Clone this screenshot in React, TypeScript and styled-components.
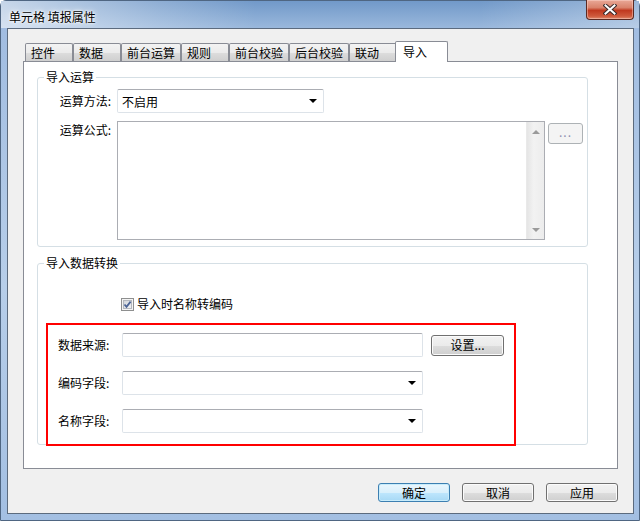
import React from "react";
import styled, { createGlobalStyle, css } from "styled-components";

const GlobalStyle = createGlobalStyle`
  html, body {
    margin: 0;
    padding: 0;
  }
  body {
    width: 640px;
    height: 521px;
    overflow: hidden;
    font-family: "Noto Sans CJK SC", "Liberation Sans", sans-serif;
    font-size: 12px;
    color: #000;
  }
`

const Window = styled.div`
  width: 640px;
  height: 521px;
  box-sizing: border-box;
  display: flex;
  flex-direction: column;
  padding: 0 5px 6px 6px;
  border: 1px solid #4f6682;
  border-radius: 6px 6px 0 0;
  background: linear-gradient(to bottom, #9fbbe0 0%, #b7cee9 55%, #a3bfe2 100%);
`

const TitleBar = styled.div`
  height: 27px;
  display: flex;
  align-items: flex-start;
  background:
    linear-gradient(to right, rgba(255, 255, 255, 0.6) 0%, rgba(255, 255, 255, 0.2) 25%, rgba(255, 255, 255, 0) 40%, rgba(255, 255, 255, 0) 75%, rgba(255, 255, 255, 0.3) 100%),
    linear-gradient(to bottom, #7199c9 0%, #9ab8dc 100%);
  margin: 0 -5px 0 -6px;
  padding: 0 5px 0 6px;
`

const Title = styled.span`
  padding: 9px 0 0 2px;
  line-height: 14px;
  color: #000;
  text-shadow: 0 0 6px #fff, 0 0 3px #fff, 0 0 2px #fff;
`

const CloseButton = styled.div`
  margin: -1px 0 0 auto;
  width: 48px;
  height: 20px;
  box-sizing: border-box;
  border: 1px solid #5b2a22;
  border-top: none;
  border-radius: 0 0 4px 4px;
  background: linear-gradient(to bottom, #e9a897 0%, #d9826b 40%, #c0391f 55%, #cf5a3c 85%, #e08a6c 100%);
  box-shadow: inset 0 0 0 1px rgba(255, 220, 210, 0.45);
  display: flex;
  align-items: center;
  justify-content: center;
`

const Client = styled.div`
  flex: 1;
  display: flex;
  flex-direction: column;
  border: 1px solid #5c6b7e;
  background: #f0f0f0;
  padding: 12px 15px 11px 15px;
`

const TabRow = styled.div`
  height: 20px;
  display: flex;
  align-items: flex-end;
  padding-left: 2px;
`

const Tab = styled.div<{ $width: number; $active?: boolean }>`
  box-sizing: border-box;
  width: ${(p) => p.$width}px;
  height: 18px;
  border: 1px solid #898c95;
  border-bottom: none;
  border-radius: 2px 2px 0 0;
  padding-left: 5px;
  line-height: 17px;
  white-space: nowrap;
  background: linear-gradient(to bottom, #f3f3f3 0%, #ebebeb 50%, #dddddd 51%, #cfcfcf 100%);
  ${(p) =>
    p.$active &&
    css`
      height: 21px;
      margin: 0 -2px -1px;
      padding-left: 7px;
      line-height: 19px;
      background: #fff;
      position: relative;
      z-index: 1;
    `}
`

const Panel = styled.div`
  height: 408px;
  box-sizing: border-box;
  border: 1px solid #898c95;
  background: #fff;
  padding: 15px 0 0 13px;
`

const GroupBox = styled.div<{ $gap?: number }>`
  position: relative;
  width: 551px;
  box-sizing: border-box;
  border: 1px solid #d5dfe5;
  border-radius: 3px;
  margin-top: ${(p) => p.$gap ?? 0}px;
`

const Legend = styled.span`
  position: absolute;
  top: -8px;
  left: 6px;
  padding: 0 2px;
  background: #fff;
  line-height: 14px;
`

const CalcBody = styled.div`
  display: flex;
  flex-direction: column;
  gap: 8px;
  padding: 11px 0 6px 0;
`

const FormRow = styled.div<{ $top?: boolean }>`
  display: flex;
  align-items: ${(p) => (p.$top ? "flex-start" : "center")};
`

const RowLabel = styled.span<{ $top?: boolean }>`
  width: 73px;
  margin-right: 6px;
  text-align: right;
  line-height: 16px;
  padding-top: ${(p) => (p.$top ? 1 : 0)}px;
`

const Combo = styled.div<{ $width: number }>`
  box-sizing: border-box;
  width: ${(p) => p.$width}px;
  height: 24px;
  border: 1px solid #dde3e9;
  border-top-color: #abadb3;
  border-radius: 2px;
  background: #fff;
  display: flex;
  align-items: center;
  justify-content: space-between;
  padding: 0 5px 0 4px;
`

const DropArrow = styled.span`
  width: 0;
  height: 0;
  border-left: 4px solid transparent;
  border-right: 4px solid transparent;
  border-top: 4px solid #000;
  margin-right: 1px;
`

const TextBox = styled.div`
  box-sizing: border-box;
  width: 428px;
  height: 119px;
  border: 1px solid #abadb3;
  background: #fff;
  display: flex;
  justify-content: flex-end;
`

const ScrollBar = styled.div`
  width: 17px;
  display: flex;
  flex-direction: column;
  justify-content: space-between;
  align-items: center;
  padding: 8px 0 7px;
  background: linear-gradient(to right, #e5e5e5, #f2f2f2 40%, #ececec);
  border-left: 1px solid #e9e9e9;
`

const ScrollArrow = styled.span<{ $down?: boolean }>`
  width: 0;
  height: 0;
  border-left: 4px solid transparent;
  border-right: 4px solid transparent;
  ${(p) =>
    p.$down
      ? css`border-top: 4px solid #9a9a9a;`
      : css`border-bottom: 4px solid #9a9a9a;`}
`

const EllipsisButton = styled.div`
  box-sizing: border-box;
  width: 35px;
  height: 21px;
  margin: 2px 0 0 3px;
  border: 1px solid #adb2b5;
  border-radius: 3px;
  background: #f4f4f4;
  color: #8f8fb0;
  text-align: center;
  line-height: 16px;
  letter-spacing: 1px;
`

const CheckRow = styled.label`
  display: flex;
  align-items: center;
  gap: 3px;
  height: 16px;
  margin: 32px 0 0 83px;
  line-height: 16px;
`

const Highlight = styled.div`
  width: 470px;
  box-sizing: border-box;
  margin: 11px 0 -2px 8px;
  border: 2px solid #ff0000;
  padding: 8px 0 11px 10px;
  display: grid;
  grid-template-columns: 64px 309px 73px;
  row-gap: 14px;
  align-items: center;
`

const SourceLabel = styled.span`
  line-height: 16px;
`

const Button = styled.div<{ $primary?: boolean; $width?: number; $height?: number }>`
  box-sizing: border-box;
  width: ${(p) => p.$width ?? 72}px;
  height: ${(p) => p.$height ?? 19}px;
  border: 1px solid #707070;
  border-radius: 3px;
  background: linear-gradient(to bottom, #f2f2f2 0%, #ebebeb 50%, #dddddd 51%, #cfcfcf 100%);
  box-shadow: inset 0 0 0 1px #fbfbfb;
  display: flex;
  align-items: center;
  justify-content: center;
  line-height: 14px;
  ${(p) =>
    p.$primary &&
    css`
      border-color: #3c7fb1;
      background: linear-gradient(to bottom, #eaf6fd 0%, #d9f0fc 50%, #bee6fd 51%, #a7d9f5 100%);
      box-shadow: inset 0 0 0 1px #c8ecfb;
    `}
`

const ButtonRow = styled.div`
  margin-top: 14px;
  display: flex;
  justify-content: flex-end;
  gap: 12px;
`

const tabs: { label: string; width: number; active?: boolean }[] = [
  { label: "控件", width: 48 },
  { label: "数据", width: 48 },
  { label: "前台运算", width: 60 },
  { label: "规则", width: 48 },
  { label: "前台校验", width: 60 },
  { label: "后台校验", width: 60 },
  { label: "联动", width: 48 },
  { label: "导入", width: 53, active: true },
]

const CloseIcon = () => (
  <svg width="14" height="11" viewBox="0 0 14 11">
    <path d="M2.5 1.5 L11.5 9.5 M11.5 1.5 L2.5 9.5" stroke="#3a2a2a" strokeWidth="4" strokeLinecap="square" />
    <path d="M2.5 1.5 L11.5 9.5 M11.5 1.5 L2.5 9.5" stroke="#fff" strokeWidth="2" strokeLinecap="square" />
  </svg>
)

const CheckIcon = () => (
  <svg width="13" height="13" viewBox="0 0 13 13">
    <defs>
      <linearGradient id="cb" x1="0" y1="0" x2="1" y2="1">
        <stop offset="0" stopColor="#cfd3d8" />
        <stop offset="1" stopColor="#f3f4f6" />
      </linearGradient>
    </defs>
    <rect x="0.5" y="0.5" width="12" height="12" fill="#f4f4f4" stroke="#8e8f8f" />
    <rect x="2.5" y="2.5" width="8" height="8" fill="url(#cb)" stroke="#b4b8be" />
    <path d="M3.5 6.5 L5.5 8.8 L9.6 3.6" fill="none" stroke="#4b6496" strokeWidth="1.8" />
  </svg>
)

export default function App() {
  return (
    <>
      <GlobalStyle />
      <Window>
        <TitleBar>
          <Title>单元格 填报属性</Title>
          <CloseButton>
            <CloseIcon />
          </CloseButton>
        </TitleBar>
        <Client>
          <TabRow>
            {tabs.map((t) => (
              <Tab key={t.label} $width={t.width} $active={t.active}>
                {t.label}
              </Tab>
            ))}
          </TabRow>
          <Panel>
            <GroupBox>
              <Legend>导入运算</Legend>
              <CalcBody>
                <FormRow>
                  <RowLabel>运算方法:</RowLabel>
                  <Combo $width={207}>
                    <span>不启用</span>
                    <DropArrow />
                  </Combo>
                </FormRow>
                <FormRow $top>
                  <RowLabel $top>运算公式:</RowLabel>
                  <TextBox>
                    <ScrollBar>
                      <ScrollArrow />
                      <ScrollArrow $down />
                    </ScrollBar>
                  </TextBox>
                  <EllipsisButton>...</EllipsisButton>
                </FormRow>
              </CalcBody>
            </GroupBox>

            <GroupBox $gap={16}>
              <Legend>导入数据转换</Legend>
              <CheckRow>
                <CheckIcon />
                <span>导入时名称转编码</span>
              </CheckRow>
              <Highlight>
                <SourceLabel>数据来源:</SourceLabel>
                <Combo $width={301} />
                <Button $width={73} $height={21}>设置...</Button>
                <SourceLabel>编码字段:</SourceLabel>
                <Combo $width={301}>
                  <span />
                  <DropArrow />
                </Combo>
                <span />
                <SourceLabel>名称字段:</SourceLabel>
                <Combo $width={301}>
                  <span />
                  <DropArrow />
                </Combo>
                <span />
              </Highlight>
            </GroupBox>
          </Panel>
          <ButtonRow>
            <Button $primary>确定</Button>
            <Button>取消</Button>
            <Button>应用</Button>
          </ButtonRow>
        </Client>
      </Window>
    </>
  )
}
